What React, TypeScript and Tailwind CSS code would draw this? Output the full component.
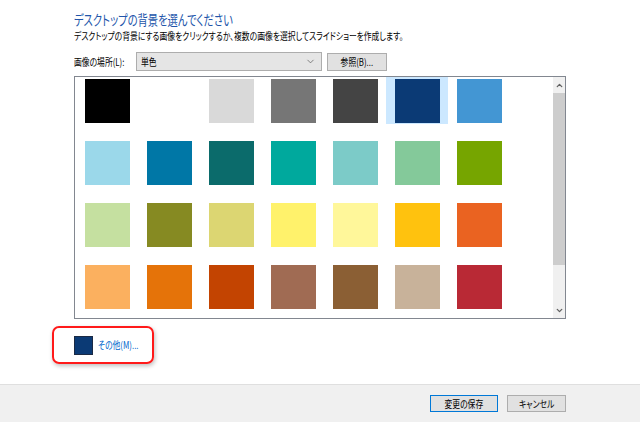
import { ChevronDown, ChevronUp } from 'lucide-react';

const rows: string[][] = [
  ['#000000', '#ffffff', '#d9d9d9', '#767676', '#444444', '#0b3a75', '#4396d3'],
  ['#9bd8ea', '#0077a6', '#0b6b6b', '#00a99d', '#7ccbc8', '#84c99a', '#76a500'],
  ['#c5e0a0', '#868a22', '#dcd672', '#fff26b', '#fff79a', '#ffc20e', '#ea6321'],
  ['#fbb05f', '#e57309', '#c34401', '#a06b53', '#8b5f34', '#c8b29a', '#b92935'],
];

// the UI font in the shot is narrow, so squeeze Noto a little
const narrow = 'inline-block whitespace-nowrap scale-x-[0.78]';

export default function App() {
  return (
    <div className="flex h-[422px] w-[640px] flex-col bg-white font-['Noto_Sans_CJK_JP',sans-serif] text-black [font-feature-settings:'palt']">
      <div className="flex-1 pl-[74px]">
        {/* heading */}
        <h1 className="mt-[9px] h-[20px] text-[14px] leading-[20px] text-[#2255aa]">
          <span className="inline-block origin-left scale-x-[0.735] whitespace-nowrap">デスクトップの背景を選んでください</span>
        </h1>
        <p className="h-[14px] text-[10px] leading-[14px]">
          <span className={`${narrow} origin-left`}>
            デスクトップの背景にする画像をクリックするか、複数の画像を選択してスライドショーを作成します。
          </span>
        </p>

        {/* picture location */}
        <div className="mt-[9px] flex h-[19px] items-center">
          <span className="w-[62px] text-[10px] leading-[14px]">
            <span className={`${narrow} origin-left`}>画像の場所(L):</span>
          </span>
          <div className="flex h-[19px] w-[186px] items-center justify-between border border-[#adadad] bg-[#e5e5e5] pl-[4px] pr-[5px] text-[10px]">
            <span className={`${narrow} origin-left`}>単色</span>
            <ChevronDown size={11} strokeWidth={1.5} className="text-[#555]" />
          </div>
          <button className="ml-[5px] h-[18px] w-[60px] border border-[#adadad] bg-[#e1e1e1] text-[10px] leading-[14px]">
            <span className={narrow}>参照(B)...</span>
          </button>
        </div>

        {/* colour list */}
        <div className="mt-[5px] flex h-[243px] w-[492px] border border-[#828790]">
          <div className="flex flex-1 flex-col gap-[15px] pl-[1px]">
            {rows.map((row, r) => (
              <div key={r} className="flex">
                {row.map((c, i) => (
                  <div
                    key={i}
                    className={
                      r === 0 && i === 5
                        ? 'flex h-[47px] w-[62px] items-center justify-center bg-[#cce8ff]'
                        : 'flex h-[47px] w-[62px] items-center justify-center'
                    }
                  >
                    <div className="h-[44px] w-[45px]" style={{ backgroundColor: c }} />
                  </div>
                ))}
              </div>
            ))}
          </div>
          <div className="flex w-[12px] flex-col bg-[#f0f0f0]">
            <div className="flex h-[16px] items-center justify-center">
              <ChevronUp size={9} strokeWidth={3.5} className="text-[#606060]" />
            </div>
            <div className="h-[172px] bg-[#cdcdcd]" />
            <div className="flex-1" />
            <div className="flex h-[16px] items-center justify-center">
              <ChevronDown size={9} strokeWidth={3.5} className="text-[#606060]" />
            </div>
          </div>
        </div>

        {/* other colour */}
        <div className="-ml-[22px] mt-[7px] flex h-[38px] w-[102px] items-center gap-[5px] rounded-[7px] border-2 border-[#ff1a1a] pl-[20px] shadow-[1px_2px_4px_rgba(0,0,0,0.25)]">
          <div className="h-[19px] w-[19px] border border-[#1b2a44] bg-[#0b3a75]" />
          <span className="text-[10px] leading-[14px] text-[#0066cc]">
            <span className={`${narrow} origin-left`}>その他(M)...</span>
          </span>
        </div>
      </div>

      {/* footer */}
      <div className="flex h-[38px] justify-end gap-[9px] border-t border-[#dfdfdf] bg-[#f0f0f0] pr-[74px] pt-[10px]">
        <button className="h-[17px] w-[68px] border border-[#0078d7] bg-[#e1e1e1] text-[10px] leading-[14px]">
          <span className={narrow}>変更の保存</span>
        </button>
        <button className="h-[17px] w-[59px] border border-[#adadad] bg-[#e1e1e1] text-[10px] leading-[14px]">
          <span className={narrow}>キャンセル</span>
        </button>
      </div>
    </div>
  );
}
